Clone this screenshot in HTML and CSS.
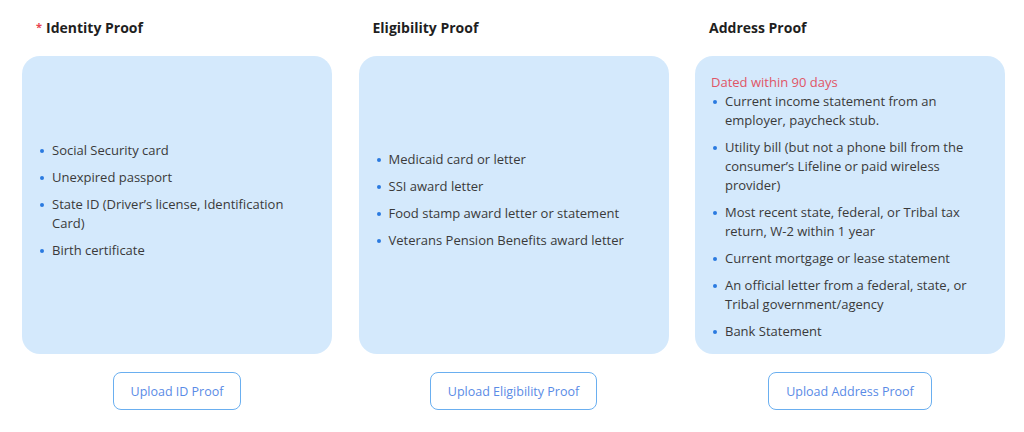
FILE: index.html
```html
<!DOCTYPE html>
<html lang="en">
<head>
    <meta charset="UTF-8">
    <meta name="viewport" content="width=device-width, initial-scale=1.0">
    <title>Upload Documents</title>
    <link rel="stylesheet" href="styles.css">
</head>
<body>
    <div class="proofs">
        <div class="proof">
            <h3><span class="required">*</span>Identity Proof</h3>
            <div class="card center">
                <ul>
                    <li>Social Security card</li>
                    <li>Unexpired passport</li>
                    <li>State ID (Driver’s license, Identification Card)</li>
                    <li>Birth certificate</li>
                </ul>
            </div>
            <button>Upload ID Proof</button>
        </div>

        <div class="proof">
            <h3>Eligibility Proof</h3>
            <div class="card center">
                <ul>
                    <li>Medicaid card or letter</li>
                    <li>SSI award letter</li>
                    <li>Food stamp award letter or statement</li>
                    <li>Veterans Pension Benefits award letter</li>
                </ul>
            </div>
            <button>Upload Eligibility Proof</button>
        </div>

        <div class="proof">
            <h3>Address Proof</h3>
            <div class="card">
                <p class="note">Dated within 90 days</p>
                <ul>
                    <li>Current income statement from an employer, paycheck stub.</li>
                    <li>Utility bill (but not a phone bill from the consumer’s Lifeline or paid wireless provider)</li>
                    <li>Most recent state, federal, or Tribal tax return, W-2 within 1 year</li>
                    <li>Current mortgage or lease statement</li>
                    <li>An official letter from a federal, state, or Tribal government/agency</li>
                    <li>Bank Statement</li>
                </ul>
            </div>
            <button>Upload Address Proof</button>
        </div>
    </div>
</body>
</html>
```

FILE: styles.css
```css
body {
    font-family: "Open Sans", "Noto Sans", sans-serif;
    margin: 0;
    padding: 0;
    background-color: #ffffff;
    color: #3a3a3a;
}

.proofs {
    display: grid;
    grid-template-columns: 310px 310px 310px;
    column-gap: 26.5px;
    padding: 18px 0 0 22px;
}

.proof {
    display: flex;
    flex-direction: column;
}

.proof h3 {
    margin: 0 0 18px 0;
    padding-left: 14px;
    font-size: 14px;
    line-height: 20px;
    font-weight: 700;
    color: #1f1f1f;
}

.required {
    display: inline-block;
    vertical-align: top;
    margin-top: -1px;
    color: #e8424f;
    font-size: 11px;
    margin-right: 4px;
}

.card {
    background-color: #d4e9fc;
    border-radius: 18px;
    padding: 17px 22px 13px 16px;
    height: 298px;
    box-sizing: border-box;
}

.card.center {
    display: flex;
    align-items: center;
}

.card.center ul {
    margin-bottom: 14px;
}

.note {
    margin: 0;
    font-size: 13px;
    line-height: 19px;
    color: #e05566;
}

ul {
    list-style: none;
    margin: 0;
    padding: 0;
}

li {
    position: relative;
    padding-left: 14px;
    margin-bottom: 8px;
    font-size: 13px;
    line-height: 19px;
}

li:last-child {
    margin-bottom: 0;
}

li::before {
    content: "";
    position: absolute;
    left: 2px;
    top: 8px;
    width: 4px;
    height: 4px;
    border-radius: 50%;
    background-color: #2a7ae0;
}

button {
    align-self: center;
    margin-top: 18px;
    height: 38px;
    padding: 0 17px;
    border: 1px solid #6aaff0;
    border-radius: 8px;
    background-color: #ffffff;
    color: #5a8be6;
    font-family: inherit;
    font-size: 12.5px;
    cursor: pointer;
}
```
